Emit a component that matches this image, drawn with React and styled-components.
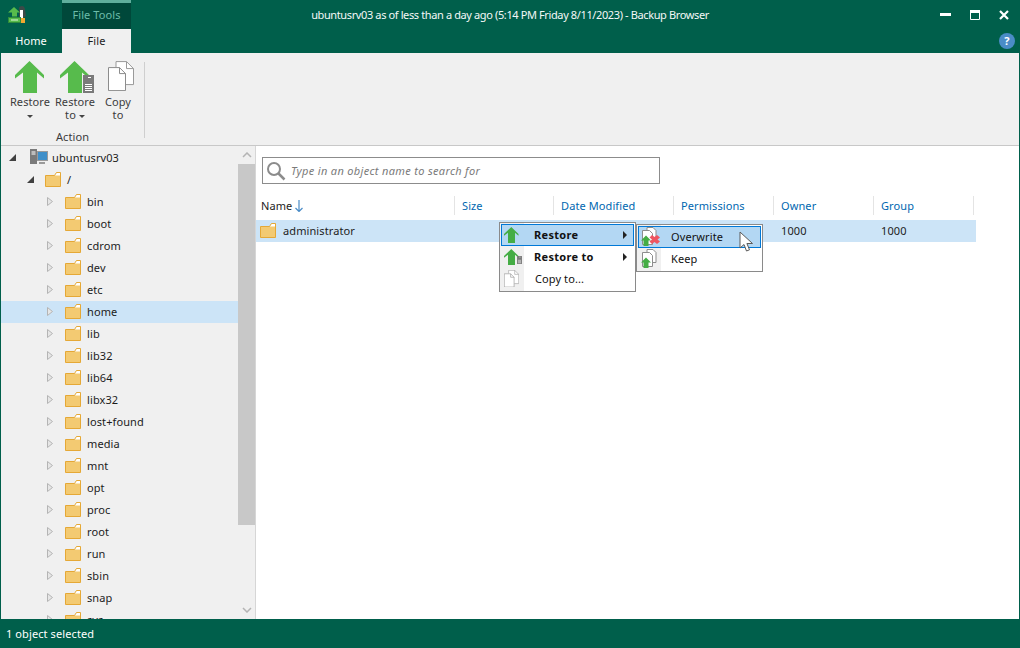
import styled, { createGlobalStyle } from "styled-components";

const GREEN = "#005f4b";
const FONT = `"Noto Sans", "Open Sans", sans-serif`;

const folders = [
  "bin", "boot", "cdrom", "dev", "etc", "home", "lib", "lib32", "lib64", "libx32",
  "lost+found", "media", "mnt", "opt", "proc", "root", "run", "sbin", "snap", "sys"
];

const columns = ["Size", "Date Modified", "Permissions", "Owner", "Group"];

function Folder() {
  return (
    <svg width="16" height="15" viewBox="0 0 16 15">
      <path d="M.5 3.500h9l2-3h4v14H.5z" fill="#f3ca72" stroke="#e5a836" />
      <path d="M10 3.500l1.800-2.500H15v2.500z" fill="#fff" />
    </svg>
  );
}

function BigArrow() {
  return (
    <svg width="30" height="32" viewBox="0 0 30 32">
      <path d="M14.500 0L29 14v3.500l-7-6V32H8V11.500l-8 6V14z" fill="#57bb4c" />
    </svg>
  );
}

function ServerSmall({ w, h }) {
  return (
    <svg width={w} height={h} viewBox="0 0 11 18">
      <rect width="11" height="18" fill="#7a7a7a" />
      <path d="M5 2.500h3M2 9.500h7M2 11.500h7M2 13.500h7M2 15.500h7" stroke="#fff" strokeWidth="1" />
    </svg>
  );
}

function CopyDocs({ size = 26 }) {
  return (
    <svg width={size} height={size * 1.16} viewBox="0 0 26 30">
      <path d="M8 6V.5h10.500l7 7V23.500H18" fill="#fff" stroke="#9a9a9a" />
      <path d="M18.500.5v7h7" fill="none" stroke="#9a9a9a" />
      <path d="M.5 6.500h11l6 6v17H.5z" fill="#fff" stroke="#8c8c8c" />
      <path d="M11.500 6.500v6h6" fill="none" stroke="#8c8c8c" />
    </svg>
  );
}

function AppLogo() {
  return (
    <svg width="18" height="18" viewBox="0 0 18 18">
      <path d="M14 0c2 0 3 2 3 4l1 6-3 2-4-1V2c0-1 1-2 3-2z" fill="#3c4a48" />
      <path d="M12 4h3v8h-3z" fill="#fff" />
      <path d="M13 12h4v5h-4z" fill="#f0a830" />
      <path d="M6 1l6 5.500H9v4H4v-4H0z" fill="#57bb4c" />
      <rect x="0.500" y="11.500" width="12" height="5" fill="#57bb4c" stroke="#2e8b3a" />
      <path d="M3 14h7" stroke="#dff3dc" />
    </svg>
  );
}

function MenuRestoreIcon() {
  return (
    <svg width="15" height="16" viewBox="0 0 30 32">
      <path d="M14.500 0L29 14v3.500l-7-6V32H8V11.500l-8 6V14z" fill="#45ad45" />
    </svg>
  );
}

function FileStack({ badge }) {
  return (
    <svg width="20" height="19" viewBox="0 0 20 19">
      <path d="M7 .5h6l3 3v10H7z" fill="#fff" stroke="#8d8d8d" />
      <path d="M2.500 3.500h7l3 3v11h-10z" fill="#fff" stroke="#8d8d8d" />
      <path d="M6 8.500l5 5H8.500V19h-5v-5.500H1z" fill="#45ad45" />
      {badge && <path d="M12 8l2.500 2L17 8l3 2.500-2.500 2 2.500 2L17 17l-2.500-2-2.500 2-2.500-2.500 2.500-2-2.500-2z" fill="#ee5560" />}
    </svg>
  );
}

function Cursor() {
  return (
    <svg width="15" height="22" viewBox="0 0 15 22">
      <path d="M1 1v16l4-3.500 2.500 6.500 3-1.200-2.600-6.300H13.500z" fill="#fff" stroke="#5a5a5a" strokeWidth="1" />
    </svg>
  );
}

function Expander({ open }) {
  return (
    <ExpanderSlot>
      {open ? (
        <svg width="7" height="7" viewBox="0 0 7 7"><path d="M7 0v7H0z" fill="#404040" /></svg>
      ) : (
        <svg width="6" height="9" viewBox="0 0 6 9"><path d="M.5.500l5 4-5 4z" fill="#e6e6e6" stroke="#b4b4b4" /></svg>
      )}
    </ExpanderSlot>
  );
}

export default function App() {
  return (
    <>
      <Global />
      <Window>
        <Header>
          <TitleRow>
            <LeftTitle>
              <LogoSlot><AppLogo /></LogoSlot>
              <ToolsTab>File Tools</ToolsTab>
            </LeftTitle>
            <Title>ubuntusrv03 as of less than a day ago (5:14 PM Friday 8/11/2023) - Backup Browser</Title>
            <WindowControls>
              <svg width="11" height="10" viewBox="0 0 11 10"><rect y="3" width="11" height="3" fill="#fff" /></svg>
              <svg width="10" height="10" viewBox="0 0 10 10"><path d="M.5.500h9v9h-9z" fill="none" stroke="#fff" /><rect width="10" height="3" fill="#fff" /></svg>
              <svg width="10" height="10" viewBox="0 0 10 10"><path d="M1 1l8 8M9 1l-8 8" stroke="#fff" strokeWidth="2.200" /></svg>
            </WindowControls>
          </TitleRow>
          <TabRow>
            <Tab>Home</Tab>
            <Tab $active>File</Tab>
            <HelpButton>?</HelpButton>
          </TabRow>
        </Header>

        <Ribbon>
          <RibbonGroup>
            <RibbonButtons>
              <RibbonButton $w={44}>
                <IconSlot><BigArrow /></IconSlot>
                <ButtonLabel>Restore<br /><Caret /></ButtonLabel>
              </RibbonButton>
              <RibbonButton $w={46}>
                <IconSlot>
                  <BigArrow />
                  <ServerBadge><ServerSmall w={11} h={18} /></ServerBadge>
                </IconSlot>
                <ButtonLabel>Restore<br />to <Caret /></ButtonLabel>
              </RibbonButton>
              <RibbonButton $w={40}>
                <IconSlot $shift={5}><CopyDocs /></IconSlot>
                <ButtonLabel>Copy<br />to</ButtonLabel>
              </RibbonButton>
            </RibbonButtons>
            <GroupLabel>Action</GroupLabel>
          </RibbonGroup>
          <RibbonDivider />
        </Ribbon>

        <Body>
          <TreePane>
            <Tree>
              <TreeRow $level={0}>
                <Expander open />
                <ServerIcon>
                  <svg width="18" height="17" viewBox="0 0 18 17">
                    <rect width="7" height="15" fill="#7a7a7a" />
                    <path d="M1.500 3h4M1.500 5h4" stroke="#fff" />
                    <rect x="7.500" y="2.500" width="10" height="9" fill="#3f8fc9" stroke="#9a9a9a" />
                    <path d="M9 13h6v2H9z" fill="#9a9a9a" />
                  </svg>
                </ServerIcon>
                <TreeLabel>ubuntusrv03</TreeLabel>
              </TreeRow>
              <TreeRow $level={1}>
                <Expander open />
                <Folder />
                <TreeLabel>/</TreeLabel>
              </TreeRow>
              {folders.map((f) => (
                <TreeRow key={f} $level={2} $selected={f === "home"}>
                  <Expander />
                  <Folder />
                  <TreeLabel>{f}</TreeLabel>
                </TreeRow>
              ))}
            </Tree>
            <ScrollBar>
              <ScrollArrow>
                <svg width="10" height="6" viewBox="0 0 10 6"><path d="M1 5l4-4 4 4" fill="none" stroke="#b4b4b4" strokeWidth="1.500" /></svg>
              </ScrollArrow>
              <ScrollThumb />
              <ScrollArrow>
                <svg width="10" height="6" viewBox="0 0 10 6"><path d="M1 1l4 4 4-4" fill="none" stroke="#b4b4b4" strokeWidth="1.500" /></svg>
              </ScrollArrow>
            </ScrollBar>
          </TreePane>

          <Content>
            <SearchBox>
              <svg width="20" height="20" viewBox="0 0 20 20">
                <circle cx="8" cy="8" r="6" fill="none" stroke="#8c8c8c" strokeWidth="2" />
                <path d="M12.500 12.500l6 6" stroke="#8c8c8c" strokeWidth="2.500" />
              </svg>
              <SearchHint>Type in an object name to search for</SearchHint>
            </SearchBox>
            <HeaderRow>
              <HeaderCell $first>
                Name
                <svg width="8" height="12" viewBox="0 0 8 12"><path d="M4 0v11M.5 8L4 11.500 7.500 8" fill="none" stroke="#4a8cc7" strokeWidth="1.200" /></svg>
              </HeaderCell>
              {columns.map((c) => (
                <HeaderCell key={c}>{c}</HeaderCell>
              ))}
            </HeaderRow>
            <FileRow>
              <NameCell><Folder /><span>administrator</span></NameCell>
              <Cell />
              <Cell />
              <Cell />
              <Cell>1000</Cell>
              <Cell>1000</Cell>
            </FileRow>

            <ContextMenu>
              <MenuItem $active>
                <MenuIcon><MenuRestoreIcon /></MenuIcon>
                <MenuText $bold>Restore</MenuText>
                <SubArrow />
              </MenuItem>
              <MenuItem>
                <MenuIcon>
                  <MenuRestoreIcon />
                  <MenuServer><ServerSmall w={5} h={8} /></MenuServer>
                </MenuIcon>
                <MenuText $bold>Restore to</MenuText>
                <SubArrow />
              </MenuItem>
              <MenuItem>
                <MenuIcon><CopyDocs size={15} /></MenuIcon>
                <MenuText $plain>Copy to...</MenuText>
              </MenuItem>
            </ContextMenu>
            <SubMenu>
              <MenuItem $active>
                <SubIcon><FileStack badge /></SubIcon>
                <MenuText>Overwrite</MenuText>
              </MenuItem>
              <MenuItem>
                <SubIcon><FileStack /></SubIcon>
                <MenuText>Keep</MenuText>
              </MenuItem>
            </SubMenu>
            <CursorSlot><Cursor /></CursorSlot>
          </Content>
        </Body>

        <StatusBar>1 object selected</StatusBar>
      </Window>
    </>
  );
}

const Global = createGlobalStyle`
  html, body { margin: 0; padding: 0; background: #fff; }
  body { font-family: ${FONT}; font-size: 11px; letter-spacing: 0.1px; color: #1c1c1c; }
`;

const Window = styled.div`
  width: 1020px;
  height: 648px;
  display: flex;
  flex-direction: column;
  overflow: hidden;
  background: ${GREEN};
`;

const Header = styled.div`
  height: 53px;
  flex: none;
  display: flex;
  flex-direction: column;
  background: ${GREEN};
  color: #fff;
`;

const TitleRow = styled.div`
  height: 29px;
  display: grid;
  grid-template-columns: 131px 1fr 131px;
`;

const LeftTitle = styled.div`
  display: flex;
`;

const LogoSlot = styled.div`
  width: 62px;
  padding: 6px 0 0 8px;
  box-sizing: border-box;
`;

const ToolsTab = styled.div`
  width: 69px;
  border-top: 3px solid #5fae9c;
  box-sizing: border-box;
  background: #00483a;
  color: #6cbcaa;
  text-align: center;
  line-height: 24px;
`;

const Title = styled.div`
  text-align: center;
  line-height: 29px;
  white-space: nowrap;
  letter-spacing: -0.38px;
  color: #f4f8f7;
`;

const WindowControls = styled.div`
  display: flex;
  justify-content: flex-end;
  align-items: center;
  gap: 19px;
  padding: 0 11px 0 0;
  margin-top: 1px;
`;

const TabRow = styled.div`
  height: 24px;
  display: flex;
  align-items: stretch;
`;

const Tab = styled.div`
  width: ${(p) => (p.$active ? 69 : 62)}px;
  text-align: center;
  line-height: 24px;
  background: ${(p) => (p.$active ? "#f0f0f0" : "transparent")};
  color: ${(p) => (p.$active ? "#1c1c1c" : "#fff")};
`;

const HelpButton = styled.div`
  width: 16px;
  height: 16px;
  margin: 4px 5px 0 auto;
  border-radius: 50%;
  background: #4a8cc7;
  color: #fff;
  font-weight: 700;
  font-size: 11px;
  line-height: 16px;
  text-align: center;
`;

const Ribbon = styled.div`
  height: 93px;
  flex: none;
  display: flex;
  margin: 0 1px;
  background: #f0f0f0;
  border-bottom: 1px solid #c8c8c8;
  box-sizing: border-box;
`;

const RibbonGroup = styled.div`
  width: 143px;
  display: flex;
  flex-direction: column;
  align-items: center;
`;

const RibbonButtons = styled.div`
  display: flex;
  padding: 8px 0 0 7px;
  width: 100%;
  box-sizing: border-box;
  height: 76px;
`;

const RibbonButton = styled.div`
  width: ${(p) => p.$w}px;
  display: flex;
  flex-direction: column;
  align-items: center;
`;

const IconSlot = styled.div`
  position: relative;
  height: 34px;
  display: flex;
  align-items: flex-start;
  margin-left: ${(p) => p.$shift || 0}px;
`;

const ServerBadge = styled.div`
  position: absolute;
  right: -4px;
  top: 14px;
  line-height: 0;
`;

const ButtonLabel = styled.div`
  text-align: center;
  line-height: 13px;
  color: #3c3c3c;
  white-space: nowrap;
`;

const Caret = styled.span`
  display: inline-block;
  width: 0;
  height: 0;
  vertical-align: middle;
  border-left: 3px solid transparent;
  border-right: 3px solid transparent;
  border-top: 3px solid #444;
`;

const GroupLabel = styled.div`
  line-height: 16px;
  color: #3c3c3c;
`;

const RibbonDivider = styled.div`
  width: 1px;
  margin: 9px 0 7px;
  background: #cfcfcf;
`;

const Body = styled.div`
  flex: 1;
  min-height: 0;
  display: flex;
  margin: 0 1px;
  background: #fff;
`;

const TreePane = styled.div`
  width: 255px;
  flex: none;
  display: flex;
  background: #f0f0f0;
  border-right: 1px solid #d6d6d6;
  box-sizing: border-box;
`;

const Tree = styled.div`
  width: 237px;
  padding-top: 1px;
  overflow: hidden;
`;

const TreeRow = styled.div`
  height: 22px;
  box-sizing: border-box;
  padding: 0 0 2px ${(p) => [8, 26, 46][p.$level]}px;
  display: flex;
  align-items: center;
  background: ${(p) => (p.$selected ? "#cce4f7" : "transparent")};
`;

const ExpanderSlot = styled.span`
  flex: none;
  width: 7px;
  display: flex;
  margin-right: 11px;
`;

const ServerIcon = styled.span`
  display: flex;
  margin: 0 -2px 0 3px;
`;

const TreeLabel = styled.span`
  margin-left: 6px;
  color: #1c1c1c;
`;

const ScrollBar = styled.div`
  width: 17px;
  display: flex;
  flex-direction: column;
`;

const ScrollArrow = styled.div`
  height: 18px;
  display: flex;
  align-items: center;
  justify-content: center;
`;

const ScrollThumb = styled.div`
  height: 361px;
  background: #c8c8c8;
  margin-bottom: auto;
`;

const Content = styled.div`
  flex: 1;
  position: relative;
  padding: 11px 0 0 6px;
`;

const SearchBox = styled.div`
  width: 398px;
  height: 27px;
  box-sizing: border-box;
  display: flex;
  align-items: center;
  gap: 5px;
  padding-left: 3px;
  border: 1px solid #8c8c8c;
`;

const SearchHint = styled.span`
  font-style: italic;
  letter-spacing: 0.33px;
  color: #7a7a7a;
`;

const HeaderRow = styled.div`
  display: grid;
  grid-template-columns: 193px 99px 120px 100px 100px 100px;
  height: 27px;
  margin-top: 9px;
`;

const HeaderCell = styled.div`
  display: flex;
  align-items: center;
  gap: 3px;
  padding-left: ${(p) => (p.$first ? 0 : 7)}px;
  margin: 3px 0 5px ${(p) => (p.$first ? -1 : 0)}px;
  color: ${(p) => (p.$first ? "#1c1c1c" : "#0067b0")};
  border-right: 1px solid #e4e4e4;
`;

const FileRow = styled.div`
  display: grid;
  grid-template-columns: 193px 99px 120px 100px 100px 100px;
  width: 720px;
  height: 22px;
  margin-left: -6px;
  padding: 0 0 1px 6px;
  box-sizing: border-box;
  background: #cce4f7;
  align-items: center;
`;

const NameCell = styled.div`
  display: flex;
  align-items: center;
  gap: 7px;
  margin-left: -2px;
`;

const Cell = styled.div`
  padding-left: 7px;
`;

const ContextMenu = styled.div`
  position: absolute;
  left: 243px;
  top: 76px;
  width: 137px;
  height: 70px;
  padding: 1px;
  box-sizing: border-box;
  background: linear-gradient(to right, #f0f0f0 0 24px, #fff 24px);
  border: 1px solid #8a8a8a;
`;

const SubMenu = styled(ContextMenu)`
  left: 380px;
  top: 78px;
  width: 127px;
  height: 48px;
`;

const MenuItem = styled.div`
  height: 22px;
  display: flex;
  align-items: center;
  box-sizing: border-box;
  position: relative;
  padding-bottom: 1px;
  background: ${(p) => (p.$active ? "#b3d7f3" : "transparent")};
  border: 1px solid ${(p) => (p.$active ? "#0078d7" : "transparent")};
`;

const MenuIcon = styled.span`
  width: 18px;
  margin-right: 4px;
  flex: none;
  display: flex;
  justify-content: center;
  position: relative;
`;

const SubIcon = styled.span`
  width: 22px;
  flex: none;
  display: flex;
  justify-content: center;
`;

const MenuServer = styled.span`
  position: absolute;
  right: -2px;
  bottom: 1px;
  line-height: 0;
`;

const MenuText = styled.span`
  margin-left: ${(p) => (p.$plain ? 11 : 10)}px;
  font-weight: ${(p) => (p.$bold ? 700 : 400)};
  letter-spacing: ${(p) => (p.$bold ? "0.3px" : "0.1px")};
  color: #111;
`;

const SubArrow = styled.span`
  position: absolute;
  right: 6px;
  top: 6px;
  border-left: 4px solid #222;
  border-top: 4px solid transparent;
  border-bottom: 4px solid transparent;
`;

const CursorSlot = styled.div`
  position: absolute;
  left: 483px;
  top: 85px;
  line-height: 0;
`;

const StatusBar = styled.div`
  height: 29px;
  flex: none;
  padding-left: 6px;
  line-height: 29px;
  color: #fff;
  background: ${GREEN};
`;
